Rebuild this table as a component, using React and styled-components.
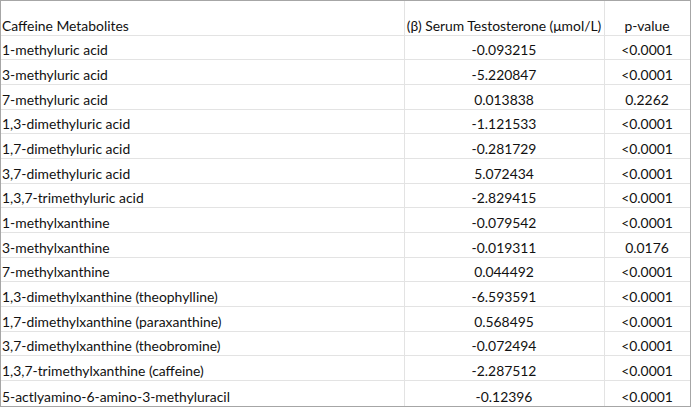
import styled, { createGlobalStyle } from 'styled-components';

const Global = createGlobalStyle`
	body {
		margin: 0;
		background: #fff;
		font-family: Lato, 'Open Sans', sans-serif;
		color: #111;
	}
`;

const Sheet = styled.div`
	width: 691px;
	height: 407px;
	box-sizing: border-box;
	border: 1px solid #a6a6a6;
	display: grid;
	grid-template-columns: 404px 200px 1fr;
	grid-template-rows: 34.5px repeat(15, 24.7px);
	overflow: hidden;
`;

const Cell = styled.div`
	display: flex;
	align-items: flex-end;
	justify-content: ${(p) => (p.$left ? 'flex-start' : 'center')};
	padding: 0 2px 1px 1px;
	font-size: 13.9px;
	line-height: 17px;
	white-space: nowrap;
	border-bottom: 1px solid #e3e3e3;
	border-right: ${(p) => (p.$last ? 'none' : '1px solid #e3e3e3')};
	${(p) => p.$bottom && 'border-bottom: none;'}
`;

const rows = [
	['1-methyluric acid', '-0.093215', '<0.0001'],
	['3-methyluric acid', '-5.220847', '<0.0001'],
	['7-methyluric acid', '0.013838', '0.2262'],
	['1,3-dimethyluric acid', '-1.121533', '<0.0001'],
	['1,7-dimethyluric acid', '-0.281729', '<0.0001'],
	['3,7-dimethyluric acid', '5.072434', '<0.0001'],
	['1,3,7-trimethyluric acid', '-2.829415', '<0.0001'],
	['1-methylxanthine', '-0.079542', '<0.0001'],
	['3-methylxanthine', '-0.019311', '0.0176'],
	['7-methylxanthine', '0.044492', '<0.0001'],
	['1,3-dimethylxanthine (theophylline)', '-6.593591', '<0.0001'],
	['1,7-dimethylxanthine (paraxanthine)', '0.568495', '<0.0001'],
	['3,7-dimethylxanthine (theobromine)', '-0.072494', '<0.0001'],
	['1,3,7-trimethylxanthine (caffeine)', '-2.287512', '<0.0001'],
	['5-actlyamino-6-amino-3-methyluracil', '-0.12396', '<0.0001'],
];

export default function App() {
	return (
		<>
			<Global />
			<Sheet>
				<Cell $left>Caffeine Metabolites</Cell>
				<Cell>(β) Serum Testosterone (μmol/L)</Cell>
				<Cell $last>p-value</Cell>
				{rows.map(([name, beta, p], i) => {
					const bottom = i === rows.length - 1;
					return [
						<Cell key={`a${i}`} $left $bottom={bottom}>{name}</Cell>,
						<Cell key={`b${i}`} $bottom={bottom}>{beta}</Cell>,
						<Cell key={`c${i}`} $last $bottom={bottom}>{p}</Cell>,
					];
				})}
			</Sheet>
		</>
	);
}
